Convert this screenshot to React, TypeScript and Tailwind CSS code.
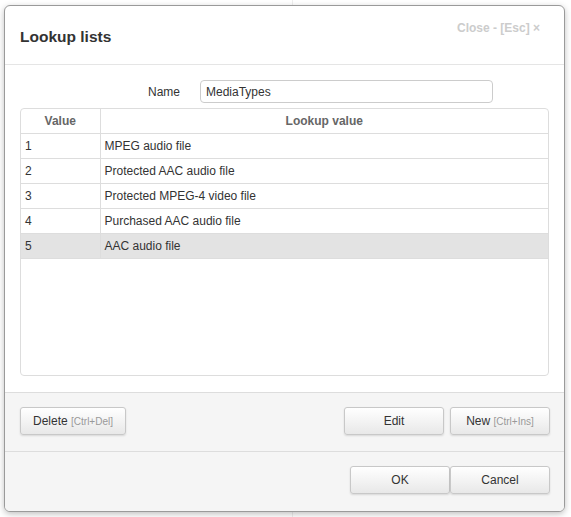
import React from 'react';

const rows = [
  { value: '1', label: 'MPEG audio file' },
  { value: '2', label: 'Protected AAC audio file' },
  { value: '3', label: 'Protected MPEG-4 video file' },
  { value: '4', label: 'Purchased AAC audio file' },
  { value: '5', label: 'AAC audio file', selected: true },
];

function Btn({ children, className = '' }: { children: React.ReactNode; className?: string }) {
  return (
    <button
      className={
        'h-[28px] rounded-[3px] border border-[#c8c8c8] bg-gradient-to-b from-white to-[#e8e8e8] text-[12px] text-[#333] shadow-[0_1px_2px_rgba(0,0,0,0.12)] ' +
        className
      }
    >
      {children}
    </button>
  );
}

export default function App() {
  return (
    <div
      className="relative h-[517px] w-[571px] overflow-hidden bg-white"
      style={{ fontFamily: '"Liberation Sans", Arial, sans-serif' }}
    >
      {/* background page line */}
      <div className="absolute left-[292px] top-0 h-full w-px bg-[#eeeeee]" />

      <div className="absolute left-[4px] top-[5px] flex h-[507px] w-[561px] flex-col overflow-hidden rounded-[6px] border border-[#9a9a9a] bg-white shadow-[0_2px_6px_rgba(0,0,0,0.25)]">
        {/* Header */}
        <div className="relative h-[59px] shrink-0 border-b border-[#e5e5e5]">
          <h3 className="absolute left-[15px] top-[19px] text-[15.5px] font-bold text-[#333]">Lookup lists</h3>
          <span className="absolute right-[24px] top-[13px] text-[12px] font-bold text-[#cccccc]">
            Close - [Esc] ×
          </span>
        </div>

        {/* Body */}
        <div className="flex h-[327px] shrink-0 flex-col px-[15px] pt-[15px]">
          <div className="flex h-[23px] items-center">
            <label className="w-[160px] pt-px text-right text-[12px] text-[#333]">Name</label>
            <input
              readOnly
              value="MediaTypes"
              className="ml-[20px] h-[23px] w-[293px] rounded-[4px] border border-[#cccccc] px-[5px] text-[12px] text-[#333] outline-none"
            />
          </div>
          <div className="mt-[5px] h-[268px] w-[529px] overflow-hidden rounded-[4px] border border-[#dddddd]">
            <table className="w-full border-collapse text-[12px] text-[#333]">
              <thead>
                <tr className="h-[24px] border-b border-[#dddddd]">
                  <th className="w-[79px] border-r border-[#dddddd] text-center font-bold text-[#666]">Value</th>
                  <th className="text-center font-bold text-[#666]">Lookup value</th>
                </tr>
              </thead>
              <tbody>
                {rows.map((r) => (
                  <tr
                    key={r.value}
                    className={'h-[25px] border-b border-[#dddddd] ' + (r.selected ? 'bg-[#e3e3e3]' : '')}
                  >
                    <td className="border-r border-[#dddddd] pl-[4px]">{r.value}</td>
                    <td className="pl-[4px]">{r.label}</td>
                  </tr>
                ))}
              </tbody>
            </table>
          </div>
        </div>

        {/* Footer actions */}
        <div className="flex h-[59px] shrink-0 items-start border-t border-[#dddddd] bg-[#f5f5f5] pl-[15px] pr-[14px] pt-[14px]">
          <Btn className="w-[106px]">
            Delete <span className="text-[10px] text-[#999]">[Ctrl+Del]</span>
          </Btn>
          <div className="ml-auto flex gap-[6px]">
            <Btn className="w-[100px]">Edit</Btn>
            <Btn className="w-[100px]">
              New <span className="text-[10px] text-[#999]">[Ctrl+Ins]</span>
            </Btn>
          </div>
        </div>

        {/* Footer dialog */}
        <div className="flex flex-1 items-start justify-end border-t border-[#dddddd] bg-[#f5f5f5] pl-[15px] pr-[14px] pt-[14px]">
          <Btn className="w-[100px]">OK</Btn>
          <Btn className="w-[100px]">Cancel</Btn>
        </div>
      </div>
    </div>
  );
}
